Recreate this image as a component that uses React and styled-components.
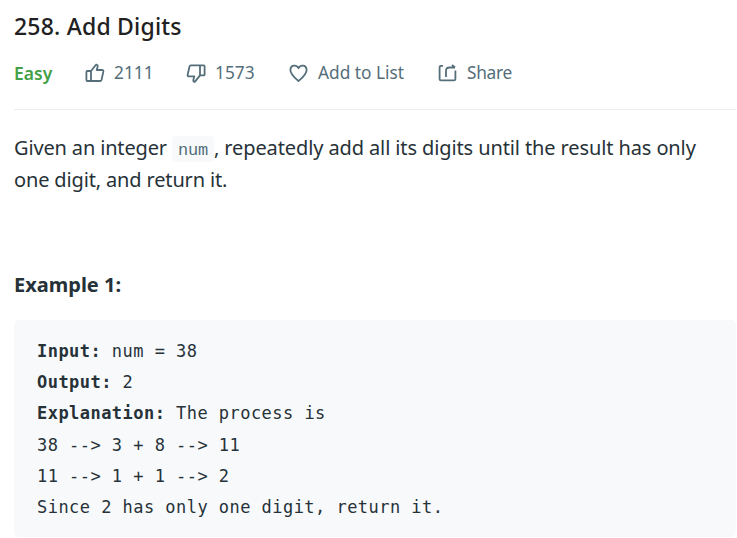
import React from "react";
import styled, { createGlobalStyle } from "styled-components";

const Global = createGlobalStyle`
  *, *::before, *::after { box-sizing: border-box; }
  body { margin: 0; background: #fff; overflow: hidden; }
`;

const Page = styled.main`
  width: 737px;
  height: 538px;
  padding: 10px 1px 0 14px;
  overflow: hidden;
  color: #263238;
  font-family: "Noto Sans", "Open Sans", sans-serif;
`;

const Title = styled.h1`
  margin: 0;
  height: 32px;
  font-size: 23px;
  line-height: 32px;
  font-weight: 500;
  letter-spacing: 0.2px;
  color: #212121;
  white-space: nowrap;
`;

const Toolbar = styled.div`
  display: flex;
  align-items: center;
  height: 68px;
  padding-bottom: 5px;
  border-bottom: 1px solid #eeeeee;
`;

const Difficulty = styled.span`
  width: 71px;
  font-size: 17.5px;
  line-height: 24px;
  font-weight: 600;
  color: #43a047;
`;

const Action = styled.button`
  display: flex;
  align-items: center;
  gap: 9px;
  width: ${(p) => p.$width}px;
  padding: 0;
  border: 0;
  background: none;
  color: #546e7a;
  font: 400 17.3px/24px "Noto Sans", sans-serif;
  letter-spacing: ${(p) => p.$spacing || 0}px;
  white-space: nowrap;
`;

const Icon = styled.svg`
  flex: none;
  width: 20px;
  height: 20px;
  fill: none;
  stroke: currentColor;
  stroke-width: 1.8;
  stroke-linejoin: round;
`;

const Label = styled.span`
  margin-top: -1px;
`;

const Statement = styled.p`
  margin: 22px 0 0;
  font-size: 20px;
  line-height: 32px;
  white-space: nowrap;
`;

const Phrase = styled.span`
  letter-spacing: ${(p) => p.$spacing}px;
`;

const InlineCode = styled.code`
  display: inline-block;
  width: 42px;
  height: 26px;
  padding-top: 3px;
  margin-left: 5px;
  border-radius: 4px;
  background: #f7f9fb;
  color: #546e7a;
  font: 400 17px/23px "Liberation Mono", monospace;
  letter-spacing: -0.3px;
  text-align: center;
`;

const ExampleTitle = styled.h2`
  margin: 73px 0 19px;
  font-size: 20px;
  line-height: 32px;
  font-weight: 700;
`;

const Sample = styled.pre`
  margin: 0;
  height: 217px;
  padding: 16px 23px;
  border-radius: 5px;
  background: #f7f9fb;
  font: 400 17px/31.2px "DejaVu Sans Mono", monospace;
  letter-spacing: 0.46px;
`;

const SampleLine = styled.div`
  height: 31.2px;
`;

const ThumbPath = () => (
  <path d="M6 8v10M1.4 9q0-1 1-1H6L11.2 1.5q1.9.5 1.5 2L11.7 7H17q1.6 0 1.4 1.4L16.5 17q-.3 1-1.3 1H2.4q-1 0-1-1z" />
);

export default function App() {
  return (
    <>
      <Global />
      <Page>
        <Title>258. Add Digits</Title>
        <Toolbar>
          <Difficulty>Easy</Difficulty>
          <Action $width={101}>
            <Icon viewBox="0 0 20 20"><ThumbPath /></Icon>
            <Label>2111</Label>
          </Action>
          <Action $width={103}>
            <Icon viewBox="0 0 20 20">
              <g transform="rotate(180 10 10.2)"><ThumbPath /></g>
            </Icon>
            <Label>1573</Label>
          </Action>
          <Action $width={149}>
            <Icon viewBox="0 0 20 20">
              <path d="M9.5 18.1C7 15.8 1.4 11.4 1.4 7.2C1.4 1.8 7.4 1.2 9.5 5.2C11.6 1.2 17.6 1.8 17.6 7.2C17.6 11.4 12 15.8 9.5 18.1Z" />
            </Icon>
            <Label>Add to List</Label>
          </Action>
          <Action $width={90} $spacing={-0.3}>
            <Icon viewBox="0 0 20 20">
              <path d="M5 2.8H3q-1.4 0-1.4 1.4V16q0 1.4 1.4 1.4h13q1.4 0 1.4-1.4V7.5M8 14V8q0-3.5 3.5-3.5H17M14 2l3 2.5" />
            </Icon>
            <Label>Share</Label>
          </Action>
        </Toolbar>
        <Statement>
          <Phrase $spacing={-0.15}>Given an integer</Phrase>
          <InlineCode>num</InlineCode>
          <Phrase $spacing={-0.11}>, repeatedly add all its digits until the result has only</Phrase>
          <br />
          <Phrase $spacing={-0.15}>one digit, and return it.</Phrase>
        </Statement>
        <ExampleTitle>Example 1:</ExampleTitle>
        <Sample>
          <SampleLine><b>Input:</b> num = 38</SampleLine>
          <SampleLine><b>Output:</b> 2</SampleLine>
          <SampleLine><b>Explanation:</b> The process is</SampleLine>
          <SampleLine>{"38 --> 3 + 8 --> 11"}</SampleLine>
          <SampleLine>{"11 --> 1 + 1 --> 2"}</SampleLine>
          <SampleLine>Since 2 has only one digit, return it.</SampleLine>
        </Sample>
      </Page>
    </>
  );
}
